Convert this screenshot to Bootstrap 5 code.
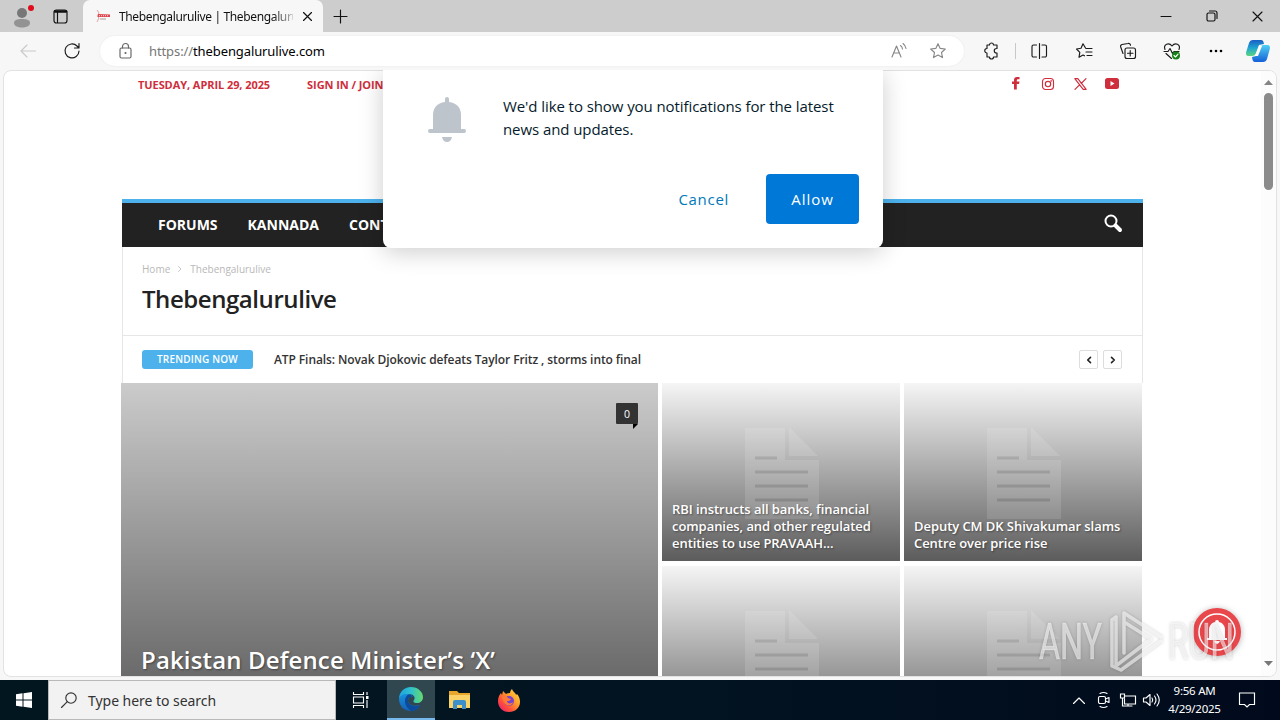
<!DOCTYPE html>
<html lang="en">
<head>
    <meta charset="UTF-8">
    <meta name="viewport" content="width=device-width, initial-scale=1.0">
    <title>Thebengalurulive</title>
    <link href="https://cdn.jsdelivr.net/npm/bootstrap@5.3.3/dist/css/bootstrap.min.css" rel="stylesheet">
    <style>
        body {
            width: 1280px;
            height: 720px;
            overflow: hidden;
            background-color: #f7f7f7;
            font-family: "Open Sans", "Noto Sans", sans-serif;
            color: #222;
        }
        svg {
            display: block;
            flex-shrink: 0;
            overflow: visible;
        }
        .line-icon {
            fill: none;
            stroke: currentColor;
            stroke-width: 1.15;
            stroke-linecap: round;
            stroke-linejoin: round;
        }
        .text-nowrap span { white-space: nowrap; }

        /* browser frame */
        .tab-strip { height: 32px; background-color: #cdcdcd; color: #111; }
        .browser-tab {
            width: 240px;
            height: 32px;
            margin-left: 15px;
            padding-left: 11px;
            background-color: #f7f7f7;
            border-radius: 7px 7px 0 0;
            font: 12px "Noto Sans", sans-serif;
        }
        .tab-title {
            width: 174px;
            margin-left: 8px;
            letter-spacing: -.36px;
            -webkit-mask-image: linear-gradient(90deg, #000 88%, rgba(0, 0, 0, .25));
        }
        .tool-bar { height: 38px; color: #1b1b1b; padding-left: 20px; }
        .address-bar {
            width: 864px;
            height: 30px;
            margin-left: 20px;
            padding: 0 18px;
            background-color: #fff;
            border-radius: 15px;
            font: 13px "Noto Sans", sans-serif;
            color: #000;
            box-shadow: 0 0 2px rgba(0, 0, 0, .08);
        }
        .url-text { margin-left: 16px; letter-spacing: -.1px; }
        .web-view {
            height: 607px;
            margin: 0 3px;
            background-color: #fff;
            border: 1px solid #e2e2e2;
            border-radius: 8px;
            overflow: hidden;
        }
        .scroll-track { width: 15px; padding: 9px 0 10px; background-color: #fcfcfc; }
        .scroll-thumb { width: 9px; height: 97px; margin-top: 8px; background-color: #8b8b8b; border-radius: 5px; }

        /* site */
        .site-wrap { width: 1021px; margin-left: 118px; }
        .top-line {
            height: 128px;
            padding: 5px 24px 0 16px;
            color: #cf2e3c;
            font-size: 11px;
            font-weight: 700;
            line-height: 17px;
            letter-spacing: -.07px;
        }
        .main-menu {
            height: 48px;
            padding: 0 21px 2px 36px;
            background-color: #222;
            border-top: 4px solid #4db2ec;
            color: #fff;
            font-size: 14px;
            font-weight: 700;
        }
        .page-head { height: 89px; padding: 14px 19px 0; border: 1px solid #e6e6e6; border-top: 0; }
        .crumbs { font-size: 10px; line-height: 16px; color: #b8b8b8; }
        .page-head h1 { margin: 7px 0 0; font-size: 24px; line-height: 30px; font-weight: 600; letter-spacing: -.44px; }
        .trending { height: 47px; padding: 0 20px 0 19px; border: solid #e6e6e6; border-width: 0 1px; }
        .trending-label {
            width: 111px;
            height: 19px;
            background-color: #4db2ec;
            border-radius: 3px;
            color: #fff;
            font-size: 10px;
            line-height: 19px;
            font-weight: 600;
            letter-spacing: .2px;
            text-align: center;
        }
        .trending-text { margin-left: 21px; font-size: 12px; font-weight: 600; letter-spacing: -.095px; color: #333; }
        .arrow-box { width: 19px; height: 19px; border: 1px solid #ddd; border-radius: 2px; }

        .news-grid { width: 1022px; margin-left: -1px; gap: 4px; }
        .news-big {
            position: relative;
            width: 537px;
            height: 300px;
            background: linear-gradient(#cbcbcb, #656565 310px);
        }
        .news-tile {
            position: relative;
            width: 238px;
            height: 178px;
            padding: 0 10px 9px;
            background: linear-gradient(#f5f5f5, #5c5c5c);
        }
        .tile-page { position: absolute; left: 83px; top: 44px; opacity: .12; }
        .tile-title {
            position: relative;
            color: #fff;
            font-size: 13px;
            font-weight: 600;
            line-height: 17px;
            letter-spacing: -.06px;
            white-space: nowrap;
            text-shadow: 1px 1px 2px rgba(0, 0, 0, .4);
        }
        .news-big h3 {
            margin: 0 0 0 20px;
            padding-top: 261px;
            color: #fff;
            font-size: 24px;
            line-height: 32px;
            font-weight: 600;
            letter-spacing: .14px;
            text-shadow: 1px 1px 2px rgba(0, 0, 0, .4);
        }
        .comment-count {
            position: absolute;
            left: 495px;
            top: 20px;
            width: 22px;
            height: 21px;
            background-color: #333;
            border-radius: 1px;
            color: #fff;
            font-size: 10.5px;
            line-height: 22px;
            text-align: center;
        }
        .comment-count::after {
            content: "";
            position: absolute;
            right: 0;
            top: 21px;
            border-top: 5px solid #000;
            border-right: 5px solid transparent;
        }

        /* notification prompt */
        .push-prompt {
            position: absolute;
            left: 383px;
            top: 70px;
            width: 500px;
            height: 178px;
            padding: 24px;
            background-color: #fff;
            border-radius: 0 0 8px 8px;
            box-shadow: 0 4px 25px rgba(0, 0, 0, .2);
            clip-path: inset(0 -50px -50px -50px);
            color: #051b2c;
        }
        .push-prompt p { margin: 1px 0 0 37px; font-size: 15px; line-height: 23px; letter-spacing: -.08px; white-space: nowrap; }
        .push-prompt .btn { font-size: 15px; border-radius: 4px; height: 50px; letter-spacing: 1px; border: 0; }
        .btn-allow, .btn-allow:hover { width: 93px; background-color: #0078d8; color: #fff; }
        .push-prompt .btn-cancel { color: #0078b8; letter-spacing: .7px; }
        .bell-float { position: absolute; left: 1193px; top: 608px; filter: drop-shadow(0 1px 3px rgba(0, 0, 0, .3)); }
        .watermark { position: absolute; left: 1030px; top: 600px; filter: drop-shadow(0 0 1.5px rgba(0, 0, 0, .3)); }

        /* taskbar */
        .task-bar { height: 40px; margin-top: 3px; background: linear-gradient(90deg, #021620, #021421 50%, #010a1c); color: #fff; font-family: "Noto Sans", sans-serif; }
        .task-search { width: 288px; height: 40px; padding-left: 12px; background-color: #f2f2f2; border: 1px solid #b9b9b9; color: #333; font-size: 14px; }
        .task-search span { margin-left: 11px; letter-spacing: -.04px; }
        .task-item { width: 49px; height: 40px; }
        .task-active { width: 48px; background-color: #304750; border-bottom: 2px solid #76b9ed; }
        .task-clock { width: 69px; font-size: 11.5px; line-height: 18px; letter-spacing: -.25px; }
    </style>
</head>
<body>
    <div class="tab-strip d-flex align-items-center">
        <svg class="ms-2" width="28" height="28" viewBox="0 0 28 28">
            <circle cx="14" cy="11" r="5" fill="#777"/>
            <path d="M6 21c0-3 3-4 8-4s8 1 8 4c0 3-4 4.500-8 4.500S6 24 6 21z" fill="#939393"/>
            <circle cx="23" cy="6" r="3" fill="#e00b1c"/>
        </svg>
        <svg class="line-icon" style="margin-left:17px" width="15" height="15" viewBox="0 0 15 15">
            <rect x="1" y="1" width="13" height="13" rx="2.500"/>
            <path d="M2 2.500h11" stroke-width="2.500"/><path d="M4.500 3v10.500"/>
        </svg>
        <div class="browser-tab d-flex align-items-center text-nowrap">
            <svg width="17" height="14" viewBox="0 0 17 14">
                <path d="M3 1l2 3-2 3 2 2-2 4" fill="none" stroke="#e3a5a8"/>
                <path d="M4 5l12 .5V8H4z" fill="#e0444c"/>
                <path d="M5 6.700h10" stroke="#fff" stroke-width=".8" stroke-dasharray="1 1"/>
                <path d="M6 10h6" stroke="#c4b8b8" stroke-width="1.500"/>
            </svg>
            <div class="tab-title">Thebengalurulive | Thebengaluru</div>
            <svg class="line-icon" style="margin-left:10px" width="9" height="9" viewBox="0 0 9 9"><path d="M.5.5l8 8M8.500.5l-8 8"/></svg>
        </div>
        <svg class="line-icon" style="margin-left:11px" width="13" height="13" viewBox="0 0 13 13"><path d="M6.500 0v13M0 6.500h13"/></svg>
        <div class="d-flex align-items-center ms-auto" style="gap:36px;padding-right:18px">
            <svg class="line-icon" width="10" height="10" viewBox="0 0 10 10"><path d="M0 5.500h10"/></svg>
            <svg class="line-icon" width="10" height="10" viewBox="0 0 10 10"><rect x="0" y="2" width="8" height="8" rx="1.500"/><path d="M2.500 0H8a2 2 0 0 1 2 2v5.500"/></svg>
            <svg class="line-icon" width="9" height="9" viewBox="0 0 9 9"><path d="M0 0l9 9M9 0L0 9"/></svg>
        </div>
    </div>

    <div class="tool-bar d-flex align-items-center">
        <svg class="line-icon" style="color:#c9c9c9" width="16" height="14" viewBox="0 0 16 14"><path d="M15.500 7H1M7 1L1 7l6 6"/></svg>
        <svg class="line-icon" style="margin-left:28px" width="16" height="16" viewBox="0 0 16 16"><path d="M15 8a7 7 0 1 1-2-5l2 2M15 .5V5h-4.500"/></svg>
        <div class="address-bar d-flex align-items-center text-nowrap">
            <svg class="line-icon" style="color:#666" width="15" height="16" viewBox="0 0 15 16"><rect x="2" y="5" width="11" height="10" rx="1.500"/><path d="M4.500 5V3.500a3 3 0 0 1 6 0V5"/><circle cx="7.500" cy="10" r=".5"/></svg>
            <span class="url-text"><span style="color:#767676">https://</span>thebengalurulive.com</span>
            <svg class="line-icon ms-auto" style="color:#888;margin-right:23px" width="16" height="16" viewBox="0 0 16 16"><path d="M1 14L5.500 3 10 14M2.500 10h6M9.500 2.500a5 5 0 0 1 2 3.500M12 .5a8 8 0 0 1 3 5"/></svg>
            <svg class="line-icon" style="color:#888" width="16" height="16" viewBox="0 0 16 16"><path d="M8 .7l2.200 4.700 5.100.6-3.800 3.500 1 5.100L8 12.100l-4.500 2.500 1-5.100L.7 6l5.100-.6z"/></svg>
        </div>
        <div class="d-flex align-items-center" style="margin-left:20px">
            <svg class="line-icon" width="16" height="16" viewBox="0 0 16 16"><path d="M3 2h2.500a2 2 0 0 1 4 0H13v3.500h-.5a2.200 2.200 0 0 0 0 4.500h.5v4H9.500a2 2 0 0 1-4 0H3v-4a2.200 2.200 0 0 1 0-4.500z"/></svg>
            <div style="width:1px;height:16px;margin:0 15px;background:#c8c8c8"></div>
            <svg class="line-icon" width="16" height="16" viewBox="0 0 16 16"><path d="M5.500 2H2.500A1.500 1.500 0 0 0 1 3.500v9A1.500 1.500 0 0 0 2.500 14h3M8.500.5v15M11 2h3A1.500 1.500 0 0 1 15.500 3.500v9a1.500 1.500 0 0 1-1.500 1.500h-3"/></svg>
            <svg class="line-icon" style="margin-left:29px" width="17" height="16" viewBox="0 0 17 16"><path d="M9.500 5L7 .8 5 5.300.5 6l3.300 3.300-.8 5 4-2.300 1.500.8M10 5.500h6M10 9h6M11 12.500h5"/></svg>
            <svg class="line-icon" style="margin-left:27px" width="16" height="16" viewBox="0 0 16 16"><rect x="5" y="5" width="10.500" height="10.500" rx="2"/><path d="M10.200 7.500v5.500M7.500 10.200H13M3 10.500L.7 4A2 2 0 0 1 2 1.500L8 .5a2 2 0 0 1 2.500 1.700"/></svg>
            <svg class="line-icon" style="margin-left:27px" width="18" height="17" viewBox="0 0 18 17"><path d="M2 6.500C0 1 6-1 9 3c3-4 9-2 7 3.500M1 8.500h4l2-3 2.500 5 1.500-2h5M3 10.500l5.500 5"/><circle cx="13" cy="12.500" r="4" fill="#168116" stroke="none"/><path d="M11 12.500l1.500 1.500 2.500-2.800" stroke="#fff"/></svg>
            <svg style="margin-left:28px" width="14" height="4" viewBox="0 0 14 4"><circle cx="2" cy="2" r="1.300"/><circle cx="7" cy="2" r="1.300"/><circle cx="12" cy="2" r="1.300"/></svg>
            <svg style="margin-left:23px" width="24" height="22" viewBox="0 0 24 22">
                <defs>
                    <linearGradient id="pilotA" x2="0" y2="1"><stop stop-color="#1a5ec4"/><stop offset=".5" stop-color="#1fa6d2"/><stop offset="1" stop-color="#5cd67f"/></linearGradient>
                    <linearGradient id="pilotB" x2="0" y2="1"><stop stop-color="#4fd0f2"/><stop offset="1" stop-color="#1460d8"/></linearGradient>
                </defs>
                <path d="M7 0h8c2 0 2.500 1.500 3 4l-5 1-3 8c-.7 2-2 3-4 3H3c-3 0-3.500-2-2.500-5L3 3c.7-2 2-3 4-3z" fill="url(#pilotA)"/>
                <path d="M17 22H9c-2 0-2.500-1.500-3-5l4-1 4-8c.7-2 2-3 4-3h3c3 0 3.500 2 2.500 5L21 19c-.7 2-2 3-4 3z" fill="url(#pilotB)"/>
                <path d="M13 6h3l-4 10H9z" fill="#fff"/>
            </svg>
        </div>
    </div>

    <div class="web-view d-flex justify-content-between">
        <div class="site-wrap">
            <div class="top-line d-flex align-items-start text-nowrap">
                <span>TUESDAY, APRIL 29, 2025</span>
                <span style="margin-left:37px">SIGN IN / JOIN</span>
                <div class="d-flex align-items-center ms-auto" style="padding-top:1px">
                    <svg width="8" height="13" viewBox="0 0 8 13"><path d="M2 12.500V7H0V4.500h2V3c0-2 1-3 3-3h2.500v2.300H6c-1 0-1.200.4-1.200 1.200v1h2.700L7 7H4.800v5.500z" fill="#cf2e3c"/></svg>
                    <svg class="line-icon" style="margin-left:22px" width="12" height="12" viewBox="0 0 12 12"><rect x=".5" y=".5" width="11" height="11" rx="3"/><circle cx="6" cy="6" r="2.700"/><circle cx="9.200" cy="2.800" r=".3"/></svg>
                    <svg class="line-icon" style="margin-left:20px" width="13" height="12" viewBox="0 0 13 12"><path d="M.8.6h3l8.400 10.800h-3zM12 .6L7.200 5.500M5.500 6.800L1 11.400"/></svg>
                    <svg style="margin-left:18px" width="14" height="11" viewBox="0 0 14 11"><rect width="14" height="11" rx="2.500" fill="#cf2e3c"/><path d="M5.500 3v5l4-2.500z" fill="#fff"/></svg>
                </div>
            </div>
            <div class="main-menu d-flex align-items-center text-nowrap">
                <span>FORUMS</span>
                <span style="margin-left:30px">KANNADA</span>
                <span style="margin-left:30px">CONTACT</span>
                <svg class="ms-auto" style="margin-top:-2px" width="18" height="18" viewBox="0 0 18 18" fill="none" stroke="#fff"><circle cx="7" cy="7" r="5.500" stroke-width="2"/><path d="M11.500 11.500L16 16" stroke-width="4" stroke-linecap="round"/></svg>
            </div>
            <div class="page-head text-nowrap">
                <div class="crumbs d-flex align-items-center">
                    <span>Home</span>
                    <svg class="line-icon" style="margin:0 8px;stroke-width:.8" width="4" height="6" viewBox="0 0 4 6"><path d="M.5.5L3 3 .5 5.500"/></svg>
                    <span>Thebengalurulive</span>
                </div>
                <h1><span>Thebengalurulive</span></h1>
            </div>
            <div class="trending d-flex align-items-center text-nowrap">
                <div class="trending-label">TRENDING NOW</div>
                <span class="trending-text">ATP Finals: Novak Djokovic defeats Taylor Fritz , storms into final</span>
                <div class="arrow-box d-flex align-items-center justify-content-center ms-auto"><svg class="line-icon" width="4" height="6" viewBox="0 0 4 6" style="stroke-width:1.600"><path d="M3.500.3L.7 3l2.800 2.700"/></svg></div>
                <div class="arrow-box d-flex align-items-center justify-content-center" style="margin-left:5px"><svg class="line-icon" width="4" height="6" viewBox="0 0 4 6" style="stroke-width:1.600"><path d="M.5.3L3.300 3 .5 5.700"/></svg></div>
            </div>
            <div class="news-grid d-flex">
                <div class="news-big text-nowrap">
                    <div class="comment-count">0</div>
                    <h3><span>Pakistan Defence Minister’s ‘X’</span></h3>
                </div>
                <div class="d-flex flex-wrap" style="width:480px;gap:5px 4px">
                    <div class="news-tile d-flex align-items-end">
                        <svg class="tile-page" width="74" height="92" viewBox="0 0 74 92"><path d="M0 1h40v32h34v59H0z" fill="#fff"/><path d="M44 0l29 29H44z" fill="#fff"/><path d="M10 31h22M10 45h53M10 59h53M10 73h53" stroke="#555" stroke-width="3"/></svg>
                        <div class="tile-title">RBI instructs all banks, financial<br>companies, and other regulated<br>entities to use PRAVAAH...</div>
                    </div>
                    <div class="news-tile d-flex align-items-end">
                        <svg class="tile-page" width="74" height="92" viewBox="0 0 74 92"><path d="M0 1h40v32h34v59H0z" fill="#fff"/><path d="M44 0l29 29H44z" fill="#fff"/><path d="M10 31h22M10 45h53M10 59h53M10 73h53" stroke="#555" stroke-width="3"/></svg>
                        <div class="tile-title">Deputy CM DK Shivakumar slams<br>Centre over price rise</div>
                    </div>
                    <div class="news-tile">
                        <svg class="tile-page" width="74" height="92" viewBox="0 0 74 92"><path d="M0 1h40v32h34v59H0z" fill="#fff"/><path d="M44 0l29 29H44z" fill="#fff"/><path d="M10 31h22M10 45h53M10 59h53" stroke="#555" stroke-width="3"/></svg>
                    </div>
                    <div class="news-tile">
                        <svg class="tile-page" width="74" height="92" viewBox="0 0 74 92"><path d="M0 1h40v32h34v59H0z" fill="#fff"/><path d="M44 0l29 29H44z" fill="#fff"/><path d="M10 31h22M10 45h53M10 59h53" stroke="#555" stroke-width="3"/></svg>
                    </div>
                </div>
            </div>
        </div>
        <div class="scroll-track d-flex flex-column align-items-center">
            <svg width="9" height="5" viewBox="0 0 9 5"><path d="M4.500 0L9 5H0z" fill="#858585"/></svg>
            <div class="scroll-thumb"></div>
            <svg class="mt-auto" width="9" height="5" viewBox="0 0 9 5"><path d="M4.500 5L9 0H0z" fill="#777"/></svg>
        </div>
    </div>

    <div class="task-bar d-flex align-items-center text-nowrap">
        <div class="task-item d-flex align-items-center justify-content-center" style="width:48px">
            <svg width="16" height="16" viewBox="0 0 16 16" fill="#fff"><path d="M0 2.200l6.500-.9v6.200H0zM7.500 1.200L16 0v7.500H7.500zM0 8.500h6.500v6.200L0 13.800zM7.500 8.500H16V16l-8.500-1.200z"/></svg>
        </div>
        <div class="task-search d-flex align-items-center">
            <svg class="line-icon" width="16" height="16" viewBox="0 0 16 16"><circle cx="10" cy="6" r="5.200"/><path d="M6.300 9.700L.5 15.500"/></svg>
            <span>Type here to search</span>
        </div>
        <div class="task-item d-flex align-items-center justify-content-center">
            <svg width="16" height="16" viewBox="0 0 16 16" fill="none" stroke="#fff" stroke-width="1.100"><path d="M.5 0v2.500h10V0M.5 16v-2.500h10V16M.5 5h10v6H.5zM14 0v3M14 8v8"/><path d="M13 4h2.500v3H13z" fill="#fff" stroke="none"/></svg>
        </div>
        <div class="task-item task-active d-flex align-items-center justify-content-center" style="margin-left:2px">
            <svg width="24" height="24" viewBox="0 0 24 24">
                <defs>
                    <linearGradient id="edgeTop" x1="0" x2="1"><stop stop-color="#1da2e2"/><stop offset=".5" stop-color="#2fc1cd"/><stop offset="1" stop-color="#66d96b"/></linearGradient>
                    <linearGradient id="edgeLow" x2="0" y2="1"><stop stop-color="#1790dd"/><stop offset="1" stop-color="#1461b3"/></linearGradient>
                </defs>
                <path d="M0 12C0 5 5 0 12 0s12 5 12 10c0 4-3 6-6 6-4 0-4-2-3-3 2-3-1-6-5-6-5 0-8 2-10 5z" fill="url(#edgeTop)"/>
                <path d="M0 12C1 8 5 6.500 9 7c3 .5 5 2 5 3-3-1-5 1-5 3 0 5 6 7 12 5-2 4-5 6-9 6-7 0-12-5-12-12z" fill="url(#edgeLow)"/>
                <path d="M9 7.500c-5 4-4 12 3 16.400 4 .3 7-1.900 9-5.900-6 3-12 0-12-5 0-2 2-4 5-3-1-2-3-2.500-5-2.500z" fill="#0c4a9b"/>
            </svg>
        </div>
        <div class="task-item d-flex align-items-center justify-content-center">
            <svg width="22" height="20" viewBox="0 0 22 20"><path d="M0 1h8l2 2h11v15H0z" fill="#e8a72c"/><path d="M0 5h21v13H0z" fill="#fbd267"/><path d="M4 19v-7q0-2 2-2h9q2 0 2 2v7h-4v-4H8v4z" fill="#3c8fc9"/></svg>
        </div>
        <div class="task-item d-flex align-items-center justify-content-center">
            <svg width="22" height="23" viewBox="0 0 22 23">
                <defs><linearGradient id="fox" x1="1" y1="0" x2="0" y2="1"><stop stop-color="#ffe34d"/><stop offset=".35" stop-color="#ffa52b"/><stop offset=".7" stop-color="#ff4a3d"/><stop offset="1" stop-color="#e01588"/></linearGradient></defs>
                <path d="M11 23C4 23 0 18 0 12c0-3 1-6 3-8l1 2 1-4 3 3c1-1 3-1 4-1 0-2 1-3 2-4 1 3 4 4 4 6l1-1c2 2 3 5 3 8 0 6-5 10-11 10z" fill="url(#fox)"/>
                <circle cx="11" cy="12" r="5" fill="#7542cf"/>
                <path d="M4 8c3-2 5-1 6 1l3 1c-1 2-2 2-4 2 0 3 4 3 6 1-1 5-9 6-11-5z" fill="#ff7a35"/>
            </svg>
        </div>
        <div class="d-flex align-items-center ms-auto" style="padding-right:25px">
            <svg class="line-icon" width="12" height="7" viewBox="0 0 12 7"><path d="M.5 6.500L6 1l5.500 5.500"/></svg>
            <svg class="line-icon" style="margin-left:13px" width="12" height="16" viewBox="0 0 12 16"><rect x=".5" y="4.500" width="7" height="7" rx="1.500"/><path d="M7.500 7l3.500-1.500v5L7.500 9M2 1.500q3.500-2 7 0M2 14.500q3.500 2 7 0"/></svg>
            <svg class="line-icon" style="margin-left:10px;stroke-linejoin:miter" width="16" height="14" viewBox="0 0 16 14"><path d="M5 3h10.500v8H4.500V6M.5 1h4v4h-4zM2.500 5v8H12M8 11v2"/></svg>
            <svg class="line-icon" style="margin-left:7px" width="17" height="14" viewBox="0 0 17 14"><path d="M.5 5h2.500L7 1.500v11L3 9H.5zM9 5q1.500 2 0 4M11.500 3q3 4 0 8M14 1q4.500 6 0 12"/></svg>
            <div class="task-clock text-center"><span>9:56 AM</span><br><span>4/29/2025</span></div>
            <svg class="line-icon" style="margin-left:10px;stroke-linejoin:miter" width="16" height="16" viewBox="0 0 16 16"><path d="M.5 1h15v11.500h-5L8 15l-2.500-2.500h-5z"/></svg>
        </div>
    </div>

    <div class="push-prompt d-flex flex-column justify-content-between">
        <div class="d-flex">
            <svg style="margin:3px 0 0 21px" width="38" height="46" viewBox="0 0 38 46" fill="#bdc4cb"><path d="M17 5V2q0-2 2-2t2 2v3c8 1 12 6 12 13v14h3q2 0 2 2t-2 2H2q-2 0-2-2t2-2h3V18C5 11 9 6 17 5zM14 40h10q-1 5-5 5t-5-5z"/></svg>
            <p>We'd like to show you notifications for the latest<br>news and updates.</p>
        </div>
        <div class="d-flex justify-content-end">
            <button class="btn btn-cancel" type="button" style="margin-right:25px">Cancel</button>
            <button class="btn btn-allow" type="button">Allow</button>
        </div>
    </div>

    <svg class="bell-float" width="48" height="48" viewBox="0 0 48 48">
        <circle cx="24" cy="24" r="24" fill="#e8474c"/>
        <circle cx="24" cy="24" r="18" fill="none" stroke="#fff" stroke-width="1.500"/>
        <path d="M22 14q0-2 2-2t2 2c4 1 6 4 6 8v8h2v2H14v-2h2v-8c0-4 2-7 6-8zM21 33h6q-1 3-3 3t-3-3z" fill="#fff"/>
    </svg>
    <svg class="watermark" width="210" height="76" viewBox="0 0 210 76">
        <g fill="#fff" fill-opacity=".55" stroke="#fff" stroke-opacity=".4" stroke-width=".7" font-family="Roboto, sans-serif" font-size="50">
            <text x="9" y="59" textLength="63" lengthAdjust="spacingAndGlyphs">ANY</text>
            <text x="138" y="59" textLength="66" lengthAdjust="spacingAndGlyphs">RUN</text>
        </g>
        <path d="M86 17l-4 3v46l9 4 40-29M86 17v48M94 53V13l37 24M94 22l27 17-34 26" fill="none" stroke="#fff" stroke-opacity=".6" stroke-width="3.500" stroke-linejoin="round" stroke-linecap="round"/>
    </svg>

    <script src="https://cdn.jsdelivr.net/npm/bootstrap@5.3.3/dist/js/bootstrap.bundle.min.js"></script>
</body>
</html>
